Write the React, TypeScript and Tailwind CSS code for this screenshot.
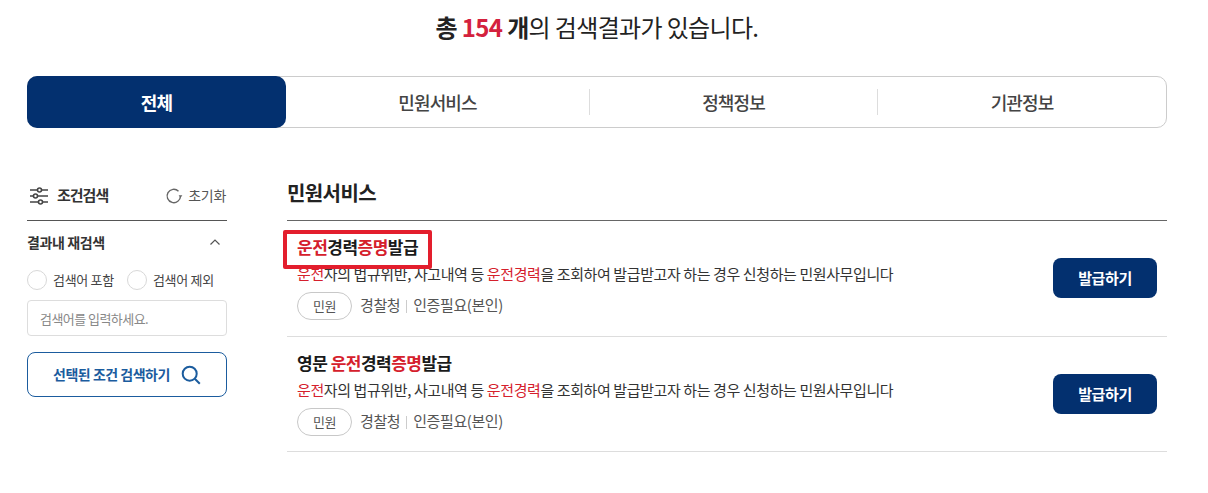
const FONT = { fontFamily: '"Noto Sans CJK KR", "Noto Sans", sans-serif' };

function Red({ children }: { children: React.ReactNode }) {
  return <span className="text-[#d5202c]">{children}</span>;
}

const DESC = (
  <>
    <Red>운전</Red>자의 법규위반, 사고내역 등 <Red>운전경력</Red>을 조회하여 발급받고자 하는 경우 신청하는 민원사무입니다
  </>
);

function ResultRow({ title, boxed, last }: { title: React.ReactNode; boxed?: boolean; last?: boolean }) {
  return (
    <div className={`relative flex items-start justify-between border-b border-[#dddddd] px-[10px] ${last ? 'h-[115px]' : 'h-[116px]'}`}>
      <div className="flex flex-col pt-[14px]">
        <h3 className="h-[24px] text-[17px] leading-[24px] font-bold tracking-[-0.5px] text-[#1a1a1a]">{title}</h3>
        <p className="mt-[4px] h-[22px] text-[15px] leading-[22px] tracking-[-0.4px] text-[#333333]">{DESC}</p>
        <div className="mt-[7px] flex h-[28px] items-center text-[15px] tracking-[-0.4px] text-[#555555]">
          <span className="flex h-[28px] w-[55px] items-center justify-center rounded-full border border-[#c8c8c8] text-[13px]">
            민원
          </span>
          <span className="ml-[8px] -translate-y-px">경찰청</span>
          <span className="mx-[6px] h-[13px] w-px bg-[#cccccc]" />
          <span className="-translate-y-px">인증필요(본인)</span>
        </div>
      </div>
      <button className="mt-[37px] h-[40px] w-[104px] rounded-[8px] bg-[#03306f] text-[15px] font-bold tracking-[-0.4px] text-white">
        발급하기
      </button>
      {boxed && (
        <div className="absolute top-[9px] left-[-4px] h-[39px] w-[149px] rounded-[2px] border-[4px] border-[#e31e2d]" />
      )}
    </div>
  );
}

function SlidersIcon() {
  return (
    <svg width="18" height="18" viewBox="0 0 18 18" fill="none" stroke="#444444" strokeWidth="1.6">
      <path d="M0 3h7.5M11.5 3H18M0 9h3.5M7.5 9H18M0 15h8.5M12.5 15H18" />
      <circle cx="9.5" cy="3" r="2" />
      <circle cx="5.5" cy="9" r="2" />
      <circle cx="10.5" cy="15" r="2" />
    </svg>
  );
}

function RefreshIcon() {
  return (
    <svg width="18" height="18" viewBox="0 0 18 18" fill="none">
      <path d="M15.5 9a6.7 6.7 0 1 1-2-4.8" stroke="#666666" strokeWidth="1.4" />
      <path d="M17.4 8.2h-3.8l1.9 2.6z" fill="#666666" />
    </svg>
  );
}

function SearchIcon() {
  return (
    <svg width="20" height="20" viewBox="0 0 20 20" fill="none" stroke="#1b5c9e" strokeWidth="2">
      <circle cx="8.7" cy="8.7" r="7" />
      <path d="M13.8 13.8l5 5" />
    </svg>
  );
}

function Radio({ label }: { label: string }) {
  return (
    <label className="flex items-center gap-[6px] text-[13px] tracking-[-0.3px] text-[#444444]">
      <span className="h-[20px] w-[20px] rounded-full border border-[#d8d8d8]" />
      {label}
    </label>
  );
}

export default function App() {
  return (
    <div className="h-[493px] w-[1208px] overflow-hidden bg-white" style={FONT}>
      <div className="ml-[27px] w-[1140px]">
        <h2 className="h-[76px] pt-[10px] text-center text-[24px] leading-[34px] tracking-[-0.65px] text-[#222222]">
          <b>
            총 <span className="text-[#d4213d]">154</span> 개
          </b>
          의 검색결과가 있습니다.
        </h2>

        {/* TABS */}
        <div className="flex h-[52px] rounded-[10px] border border-[#cccccc] text-[18px] font-medium tracking-[-0.9px] text-[#444444]">
          <div className="-my-px -ml-px flex h-[52px] w-[259px] items-center justify-center rounded-[10px] bg-[#03306f] font-bold text-white">
            전체
          </div>
          <div className="flex w-[303px] items-center justify-center">민원서비스</div>
          <div className="my-[12px] w-px bg-[#dddddd]" />
          <div className="flex w-[287px] items-center justify-center">정책정보</div>
          <div className="my-[12px] w-px bg-[#dddddd]" />
          <div className="flex flex-1 items-center justify-center">기관정보</div>
        </div>

        <div className="mt-[49px] flex">
          {/* FILTER */}
          <aside className="w-[200px]">
            <div className="flex h-[44px] items-center justify-between border-b border-[#555555] pb-[6px]">
              <div className="flex items-center gap-[9px] pl-[3px] text-[15px] font-bold tracking-[-1px] text-[#333333]">
                <SlidersIcon />
                조건검색
              </div>
              <div className="flex items-center gap-[5px] pr-px text-[14px] tracking-[-0.3px] text-[#555555]">
                <RefreshIcon />
                초기화
              </div>
            </div>
            <div className="mt-[11px] flex h-[20px] items-center justify-between pr-[6px]">
              <span className="text-[14px] font-bold tracking-[-0.4px] text-[#333333]">결과내 재검색</span>
              <svg width="12" height="8" viewBox="0 0 12 8" fill="none" stroke="#555555" strokeWidth="1.2">
                <path d="M1.5 6.5L6 2l4.5 4.5" />
              </svg>
            </div>
            <div className="mt-[18px] flex items-center gap-[13px]">
              <Radio label="검색어 포함" />
              <Radio label="검색어 제외" />
            </div>
            <input
              placeholder="검색어를 입력하세요."
              className="mt-[10px] h-[36px] w-full rounded-[4px] border border-[#dddddd] px-[12px] text-[13px] tracking-[-0.55px] placeholder:text-[#888888]"
            />
            <button className="mt-[16px] flex h-[45px] w-full items-center justify-center gap-[11px] rounded-[8px] border border-[#1b5c9e] text-[14px] font-bold tracking-[-0.5px] text-[#1b5c9e]">
              선택된 조건 검색하기
              <SearchIcon />
            </button>
          </aside>

          {/* RESULTS */}
          <section className="ml-[60px] flex-1">
            <div className="flex h-[44px] items-start border-b border-[#666666]">
              <h2 className="mt-px text-[20px] leading-[30px] font-bold tracking-[-0.6px] text-[#222222]">민원서비스</h2>
            </div>
            <ResultRow
              boxed
              title={
                <>
                  <Red>운전</Red>경력<Red>증명</Red>발급
                </>
              }
            />
            <ResultRow
              last
              title={
                <>
                  영문 <Red>운전</Red>경력<Red>증명</Red>발급
                </>
              }
            />
          </section>
        </div>
      </div>
    </div>
  );
}
